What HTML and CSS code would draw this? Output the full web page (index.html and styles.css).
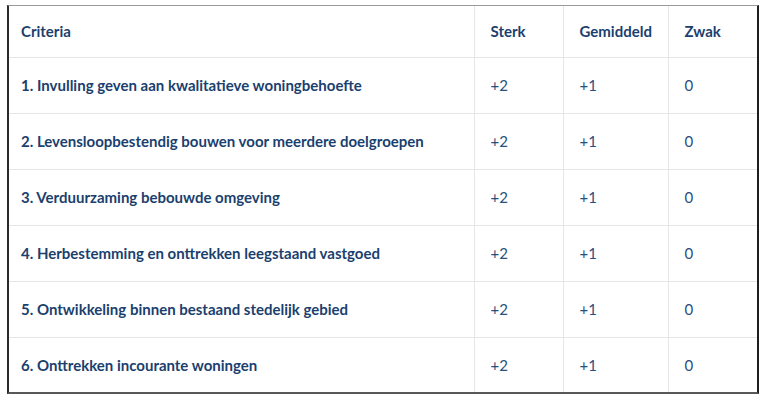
FILE: index.html
```html
<!DOCTYPE html>
<html lang="nl">
<head>
<meta charset="utf-8">
<title>Criteria</title>
<link rel="stylesheet" href="styles.css">
</head>
<body>
<div class="frame">
  <table class="criteria">
    <colgroup>
      <col class="c-name">
      <col class="c-sterk">
      <col class="c-gem">
      <col class="c-zwak">
    </colgroup>
    <thead>
      <tr>
        <th>Criteria</th>
        <th>Sterk</th>
        <th>Gemiddeld</th>
        <th>Zwak</th>
      </tr>
    </thead>
    <tbody>
      <tr><th>1. Invulling geven aan kwalitatieve woningbehoefte</th><td>+2</td><td>+1</td><td>0</td></tr>
      <tr><th>2. Levensloopbestendig bouwen voor meerdere doelgroepen</th><td>+2</td><td>+1</td><td>0</td></tr>
      <tr><th>3. Verduurzaming bebouwde omgeving</th><td>+2</td><td>+1</td><td>0</td></tr>
      <tr><th>4. Herbestemming en onttrekken leegstaand vastgoed</th><td>+2</td><td>+1</td><td>0</td></tr>
      <tr><th>5. Ontwikkeling binnen bestaand stedelijk gebied</th><td>+2</td><td>+1</td><td>0</td></tr>
      <tr><th>6. Onttrekken incourante woningen</th><td>+2</td><td>+1</td><td>0</td></tr>
    </tbody>
  </table>
</div>
</body>
</html>
```
FILE: styles.css
```css
html, body {
  margin: 0;
  padding: 0;
  background: #ffffff;
}

body {
  padding: 5px 0 0 7px;
  font-family: Lato, "Open Sans", sans-serif;
  color: #1b3f6e;
}

.frame {
  width: 748px;
  border-top: 1px solid #9a9a9a;
  border-left: 2px solid #2b2b2b;
  border-right: 2px solid #1e1e1e;
  border-bottom: 2px solid #585858;
  background: #fff;
}

.criteria {
  width: 100%;
  border-collapse: collapse;
  table-layout: fixed;
}

.c-name { width: 465px; }
.c-sterk { width: 89px; }
.c-gem { width: 105px; }
.c-zwak { width: 89px; }

.criteria th,
.criteria td {
  text-align: left;
  vertical-align: middle;
  padding: 0 0 0 16px;
  border-left: 1px solid #e6e6e6;
  border-bottom: 1px solid #e6e6e6;
  font-size: 15px;
  line-height: 18px;
  white-space: nowrap;
}

.criteria th {
  font-weight: 700;
}

.criteria td {
  font-weight: 400;
  color: #2a4f7e;
}

.criteria tr > :first-child {
  border-left: none;
  padding-left: 12px;
}

.criteria tbody tr:last-child > * {
  border-bottom: none;
}

.criteria thead tr { height: 51px; }
.criteria tbody tr { height: 56px; }
.criteria tbody tr:last-child { height: 55px; }
```
